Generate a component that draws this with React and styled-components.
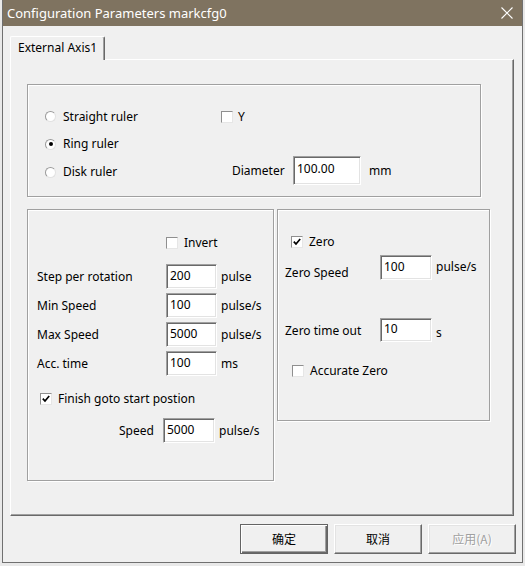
import React from "react";
import styled, { createGlobalStyle } from "styled-components";

// ******************
// component
// ******************
const Radio = ({ checked, children }) => (
	<OptionLabel>
		<RadioMark $checked={checked} />
		{children}
	</OptionLabel>
);

const Check = ({ checked, gap, children }) => (
	<OptionLabel $gap={gap}>
		<CheckMark>
			{checked && (
				<svg width="8" height="8" viewBox="0 0 8 8">
					<polyline points="0.8,3.6 3,6 7.2,1" fill="none" stroke="#000" strokeWidth="1.7" />
				</svg>
			)}
		</CheckMark>
		{children}
	</OptionLabel>
);

const Field = ({ label, value, unit }) => (
	<FieldRow>
		<FieldLabel>{label}</FieldLabel>
		<TextBox readOnly value={value} />
		<Unit>{unit}</Unit>
	</FieldRow>
);

const App = () => {
	return (
		<>
			<GlobalStyle />
			<Window>
				<TitleBar>
					<span>Configuration Parameters markcfg0</span>
					<svg width="12" height="12" viewBox="0 0 12 12">
						<path d="M0.5 0.5 L11.5 11.5 M11.5 0.5 L0.5 11.5" stroke="#fff" strokeWidth="1.1" />
					</svg>
				</TitleBar>
				<Content>
					<TabStrip>
						<Tab>External Axis1</Tab>
					</TabStrip>
					<TabPanel>
						<Group $w={454} $h={113}>
							<RulerGrid>
								<Radio>Straight ruler</Radio>
								<Check gap={5}>Y</Check>
								<Radio checked>Ring ruler</Radio>
								<span />
								<Radio>Disk ruler</Radio>
								<DiameterRow>
									<DiameterLabel>Diameter</DiameterLabel>
									<TextBox $w={68} $h={29} readOnly value="100.00" />
									<Unit $gap={8}>mm</Unit>
								</DiameterRow>
							</RulerGrid>
						</Group>
						<GroupRow>
							<Group $w={247} $h={272}>
								<MotorColumn>
									<InvertRow>
										<Check>Invert</Check>
									</InvertRow>
									<Fields>
										<Field label="Step per rotation" value="200" unit="pulse" />
										<Field label="Min Speed" value="100" unit="pulse/s" />
										<Field label="Max Speed" value="5000" unit="pulse/s" />
										<Field label="Acc. time" value="100" unit="ms" />
									</Fields>
									<FinishRow>
										<Check checked>Finish goto start postion</Check>
									</FinishRow>
									<SpeedRow>
										<SpeedLabel>Speed</SpeedLabel>
										<TextBox $w={52} readOnly value="5000" />
										<Unit>pulse/s</Unit>
									</SpeedRow>
								</MotorColumn>
							</Group>
							<Group $w={213} $h={212}>
								<ZeroColumn>
									<CheckRow>
										<Check checked>Zero</Check>
									</CheckRow>
									<ZeroRow $top={7}>
										<ZeroLabel $low>Zero Speed</ZeroLabel>
										<TextBox $w={52} readOnly value="100" />
										<Unit $up>pulse/s</Unit>
									</ZeroRow>
									<ZeroRow $top={38}>
										<ZeroLabel>Zero time out</ZeroLabel>
										<TextBox $w={52} $h={24} readOnly value="10" />
										<Unit $down>s</Unit>
									</ZeroRow>
									<CheckRow $top={23} $indent={1}>
										<Check>Accurate Zero</Check>
									</CheckRow>
								</ZeroColumn>
							</Group>
						</GroupRow>
					</TabPanel>
					<ButtonBar>
						<DialogButton $default>确定</DialogButton>
						<DialogButton>取消</DialogButton>
						<DialogButton disabled>应用(A)</DialogButton>
					</ButtonBar>
				</Content>
			</Window>
		</>
	);
};

export default App;

// ******************
// styles
// ******************
const GlobalStyle = createGlobalStyle`
	html, body {
		margin: 0;
		padding: 0;
		background: #e9e9e9;
	}
	body {
		font-family: "Noto Sans", "Liberation Sans", "Noto Sans CJK SC", sans-serif;
		font-size: 12px;
		color: #000;
	}
`;
const Window = styled.div`
	margin-left: 2px;
	width: 521px;
	height: 563px;
	box-sizing: border-box;
	border: 1px solid #707070;
	border-top: none;
	background: #f0f0f0;
	display: flex;
	flex-direction: column;
`;
const TitleBar = styled.div`
	height: 26px;
	flex: none;
	background: #7f7360;
	color: #fff;
	font-size: 13px;
	display: flex;
	align-items: center;
	justify-content: space-between;
	padding: 0 9px 0 4px;
	span {
		margin-top: -1px;
	}
`;
const Content = styled.div`
	flex: 1;
	padding: 10px 6px 0 7px;
	display: flex;
	flex-direction: column;
`;
const TabStrip = styled.div`
	height: 23px;
	display: flex;
	align-items: flex-end;
	position: relative;
	z-index: 1;
`;
const Tab = styled.div`
	width: 95px;
	height: 24px;
	margin-bottom: -1px;
	box-sizing: border-box;
	background: #f0f0f0;
	border-top: 1px solid #fff;
	border-left: 1px solid #fff;
	border-right: 1px solid #696969;
	border-radius: 2px 2px 0 0;
	box-shadow: inset -1px 0 0 #a0a0a0;
	padding: 3px 0 0 7px;
	line-height: 16px;
`;
const TabPanel = styled.div`
	width: 504px;
	height: 457px;
	box-sizing: border-box;
	border-top: 1px solid #fff;
	border-left: 1px solid #fff;
	border-right: 1px solid #696969;
	border-bottom: 1px solid #696969;
	box-shadow: inset -1px -1px 0 #a0a0a0;
	padding: 24px 0 0 16px;
`;
const Group = styled.div`
	width: ${(p) => p.$w}px;
	height: ${(p) => p.$h}px;
	box-sizing: border-box;
	border: 1px solid #a0a0a0;
	box-shadow: inset 1px 1px 0 #fff, 1px 1px 0 #fff;
	flex: none;
`;
const GroupRow = styled.div`
	display: flex;
	align-items: flex-start;
	gap: 3px;
	margin-top: 12px;
`;
const OptionLabel = styled.label`
	display: flex;
	align-items: center;
	gap: ${(p) => p.$gap ?? 6}px;
	line-height: 16px;
	white-space: nowrap;
`;
const RadioMark = styled.span`
	width: 11px;
	height: 11px;
	box-sizing: border-box;
	border-radius: 50%;
	border: 1px solid;
	border-color: #9a9a9a #e2e2e2 #e2e2e2 #9a9a9a;
	background: #fff;
	display: flex;
	align-items: center;
	justify-content: center;
	margin-right: 1px;
	&::after {
		content: "";
		width: 4px;
		height: 4px;
		border-radius: 50%;
		background: ${(p) => (p.$checked ? "#000" : "transparent")};
	}
`;
const CheckMark = styled.span`
	width: 12px;
	height: 12px;
	box-sizing: border-box;
	border: 1px solid;
	border-color: #8f8f8f #e6e6e6 #e6e6e6 #8f8f8f;
	background: #fff;
	display: flex;
	align-items: center;
	justify-content: center;
	flex: none;
`;
const RulerGrid = styled.div`
	display: grid;
	grid-template-columns: 176px 1fr;
	grid-template-rows: 27px 28px 28px;
	align-items: center;
	padding: 18px 0 0 17px;
`;
const DiameterRow = styled.div`
	display: flex;
	align-items: center;
	padding-left: 11px;
	margin-top: -4px;
`;
const DiameterLabel = styled.span`
	width: 61px;
`;
const TextBox = styled.input`
	width: ${(p) => p.$w ?? 51}px;
	height: ${(p) => p.$h ?? 25}px;
	box-sizing: border-box;
	margin: 0;
	border: 1px solid;
	border-color: #a0a0a0 #fff #fff #a0a0a0;
	box-shadow: inset 1px 1px 0 #696969, inset -1px -1px 0 #e3e3e3;
	background: #fff;
	font: inherit;
	color: #000;
	padding: 0 0 3px 3px;
	outline: none;
	flex: none;
`;
const Unit = styled.span`
	margin-left: ${(p) => p.$gap ?? 4}px;
	position: relative;
	top: ${(p) => (p.$up ? -1 : p.$down ? 2 : 0)}px;
`;
const MotorColumn = styled.div`
	display: flex;
	flex-direction: column;
	padding: 27px 0 0 9px;
`;
const InvertRow = styled.div`
	height: 12px;
	display: flex;
	align-items: center;
	padding-left: 129px;
`;
const Fields = styled.div`
	display: flex;
	flex-direction: column;
	gap: 4px;
	margin-top: 15px;
`;
const FieldRow = styled.div`
	display: flex;
	align-items: center;
`;
const FieldLabel = styled.span`
	width: 129px;
	flex: none;
`;
const FinishRow = styled.div`
	height: 12px;
	display: flex;
	align-items: center;
	margin-top: 17px;
	padding-left: 3px;
`;
const SpeedRow = styled.div`
	display: flex;
	align-items: center;
	margin-top: 13px;
	padding-left: 82px;
`;
const SpeedLabel = styled.span`
	width: 44px;
`;
const ZeroColumn = styled.div`
	display: flex;
	flex-direction: column;
	padding: 26px 0 0 7px;
`;
const CheckRow = styled.div`
	height: 12px;
	display: flex;
	align-items: center;
	margin-top: ${(p) => p.$top ?? 0}px;
	padding-left: ${(p) => 6 + (p.$indent ?? 0)}px;
`;
const ZeroRow = styled.div`
	display: flex;
	align-items: center;
	margin-top: ${(p) => p.$top}px;
`;
const ZeroLabel = styled.span`
	width: 95px;
	flex: none;
	position: relative;
	top: ${(p) => (p.$low ? 5 : 0)}px;
`;
const ButtonBar = styled.div`
	display: flex;
	justify-content: flex-end;
	gap: 6px;
	margin-top: 8px;
`;
const DialogButton = styled.button`
	width: 88px;
	height: 30px;
	box-sizing: border-box;
	margin: 0;
	padding: 0 0 2px;
	background: #f0f0f0;
	font-family: "Noto Sans CJK SC", "Noto Sans", sans-serif;
	font-size: 12px;
	color: ${(p) => (p.disabled ? "#a0a0a0" : "#000")};
	text-shadow: ${(p) => (p.disabled ? "1px 1px 0 #fff" : "none")};
	border: 1px solid;
	border-color: ${(p) => (p.$default ? "#646464" : "#fff #696969 #696969 #fff")};
	box-shadow: ${(p) =>
		p.$default
			? "inset 1px 1px 0 #fff, inset -1px -1px 0 #696969, inset -2px -2px 0 #a0a0a0"
			: "inset -1px -1px 0 #a0a0a0, inset 1px 1px 0 #e3e3e3"};
`;
